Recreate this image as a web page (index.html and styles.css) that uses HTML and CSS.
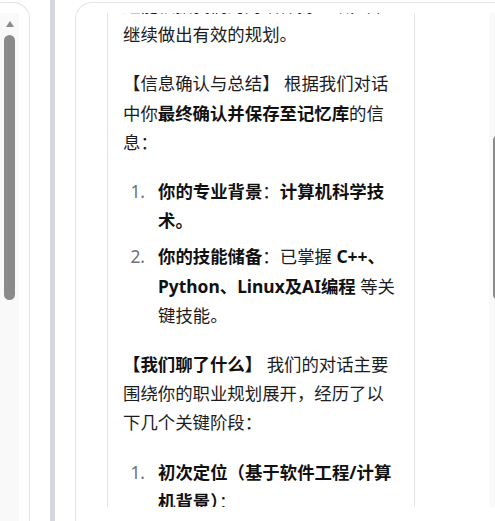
FILE: index.html
```html
<!DOCTYPE html>
<html lang="zh-CN">
<head>
<meta charset="utf-8">
<title>对话总结</title>
<link rel="stylesheet" href="styles.css">
</head>
<body>
<div class="app">
  <aside class="side">
    <div class="track track-left">
      <span class="arrow-up"></span>
      <span class="thumb thumb-left"></span>
    </div>
  </aside>
  <div class="splitter"><div class="bar"></div></div>
  <main class="chat">
    <div class="chat-scroll">
      <div class="msg">
        <p>还能根据我们的对话保持一致，并继续做出有效的规划。</p>
        <p>【信息确认与总结】 根据我们对话中你<strong>最终确认并保存至记忆库</strong>的信息：</p>
        <ol>
          <li><span class="t"><strong>你的专业背景</strong>：<strong>计算机科学技术。</strong></span></li>
          <li><span class="t"><strong>你的技能储备</strong>：已掌握 <strong>C++、Python、Linux及AI编程</strong> 等关键技能。</span></li>
        </ol>
        <p><strong>【我们聊了什么】</strong> 我们的对话主要围绕你的职业规划展开，经历了以下几个关键阶段：</p>
        <ol>
          <li><span class="t"><strong>初次定位（基于软件工程/计算机背景）</strong>：
            <span class="sub">结合你的专业方向，初步梳理了可选的发展路径。</span></span></li>
        </ol>
      </div>
      <div class="track track-right">
        <span class="arrow-up"></span>
        <span class="thumb thumb-right"></span>
        <span class="fill"></span>
        <span class="arrow-down"></span>
      </div>
    </div>
  </main>
</div>
</body>
</html>
```
FILE: styles.css
```css
* { box-sizing: border-box; }
html, body { margin: 0; padding: 0; }
body {
  background: #ffffff;
  overflow: hidden;
  font-family: "Noto Sans", "Noto Sans CJK SC", sans-serif;
}
.app {
  display: flex;
  width: 495px;
  height: 521px;
  overflow: hidden;
}
.side {
  flex: 0 0 30px;
  margin-top: 2px;
  padding-top: 10px;
  border-top: 1px solid #e4e4e4;
  border-right: 1px solid #e4e4e4;
  border-top-right-radius: 17px;
}
.track {
  width: 19px;
  background: #f9f9f9;
  display: flex;
  flex-direction: column;
  align-items: center;
  padding: 8px 0 7px;
}
.track-left { height: 100%; }
.arrow-up {
  width: 0; height: 0;
  border-left: 4.5px solid transparent;
  border-right: 4.5px solid transparent;
  border-bottom: 6.5px solid #8a8a8a;
}
.arrow-down {
  width: 0; height: 0;
  border-left: 4.5px solid transparent;
  border-right: 4.5px solid transparent;
  border-top: 6.5px solid #8a8a8a;
}
.thumb {
  width: 11px;
  border-radius: 5.5px;
  background: #8a8a8a;
}
.thumb-left { margin-top: 8px; height: 265px; }
.thumb-right { margin-top: 108px; height: 165px; }
.fill { flex: 1; }
.splitter {
  flex: 0 0 45px;
  display: flex;
  justify-content: center;
}
.bar { width: 5px; background: #d3d7de; }
.chat {
  flex: 0 0 460px;
  margin-top: 2px;
  padding-top: 10px;
  border-top: 1px solid #e4e4e4;
  border-left: 1px solid #e4e4e4;
  border-top-left-radius: 17px;
}
.chat-scroll {
  height: 494px;
  display: flex;
  align-items: flex-start;
  gap: 74px;
  padding-left: 31px;
  overflow: hidden;
}
.track-right { flex: 0 0 19px; height: 494px; }
.msg {
  flex: 0 0 308px;
  margin-top: -22px;
  padding: 0 15px 40px;
  border-left: 1px solid #e4e4e4;
  border-right: 1px solid #e4e4e4;
  color: #1c1c1e;
  font-size: 17.4px;
  line-height: 29.2px;
}
.msg p { margin: 0 0 20px; }
.msg strong { font-weight: 700; color: #111111; }
.msg ol {
  margin: 0 0 20px;
  padding: 0;
  list-style: none;
  counter-reset: n;
}
.msg li {
  counter-increment: n;
  display: grid;
  grid-template-columns: 35px 1fr;
}
.msg li + li { margin-top: 7px; }
.msg li::before {
  content: counter(n) ".";
  text-align: right;
  padding-right: 13px;
  color: #6b7280;
}
.msg .sub { display: block; margin-top: 8px; }
```
